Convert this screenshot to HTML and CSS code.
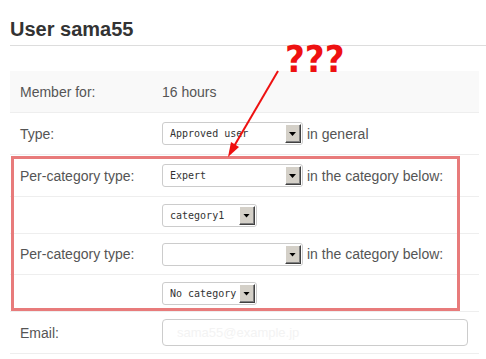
FILE: index.html
```html
<!DOCTYPE html>
<html>

<head>
  <title>User sama55</title>
  <link rel="stylesheet" href="styles.css">
</head>

<body>
  <div class="page">
    <h1 class="page-title">User sama55</h1>

    <div class="profile">
      <div class="row row-shaded">
        <div class="row-label">Member for:</div>
        <div class="row-value">16 hours</div>
      </div>
      <div class="row">
        <div class="row-label">Type:</div>
        <div class="row-value">
          <div class="select select-wide"><span>Approved user</span><i class="select-btn"></i></div>
          <span class="row-note">in general</span>
        </div>
      </div>
      <div class="row">
        <div class="row-label">Per-category type:</div>
        <div class="row-value">
          <div class="select select-wide"><span>Expert</span><i class="select-btn"></i></div>
          <span class="row-note">in the category below:</span>
        </div>
      </div>
      <div class="row row-sub">
        <div class="row-label"></div>
        <div class="row-value">
          <div class="select select-narrow"><span>category1</span><i class="select-btn"></i></div>
        </div>
      </div>
      <div class="row row-tight">
        <div class="row-label">Per-category type:</div>
        <div class="row-value">
          <div class="select select-wide"><span></span><i class="select-btn"></i></div>
          <span class="row-note">in the category below:</span>
        </div>
      </div>
      <div class="row row-sub">
        <div class="row-label"></div>
        <div class="row-value">
          <div class="select select-narrow"><span>No category</span><i class="select-btn"></i></div>
        </div>
      </div>
      <div class="row">
        <div class="row-label">Email:</div>
        <div class="row-value">
          <input class="text-input" type="text" placeholder="sama55@example.jp">
        </div>
      </div>
    </div>

    <!-- annotation drawn over the screenshot -->
    <div class="callout-box"></div>
    <svg class="callout-arrow" width="486" height="359" viewBox="0 0 486 359">
      <line x1="278" y1="71" x2="233" y2="148" stroke="#ee1111" stroke-width="2" />
      <polygon points="228,157 239,147 231,142" fill="#ee1111" />
    </svg>
    <div class="callout-text">???</div>
  </div>
</body>

</html>
```

FILE: styles.css
```css
/*  reset */
* {
  margin: 0;
  padding: 0;
  box-sizing: border-box;
}

body {
  background: #fff;
  font-family: "Liberation Sans", Arial, sans-serif;
  color: #555;
}

.page {
  position: relative;
  width: 486px;
  height: 359px;
  overflow: hidden;
}

.page-title {
  margin-left: 10px;
  padding-top: 17px;
  padding-bottom: 4px;
  line-height: 24px;
  font-size: 20px;
  font-weight: bold;
  color: #333;
  border-bottom: 1px solid #ddd;
}

.profile {
  margin: 25px 7px 0 10px;
}

.row {
  display: flex;
  align-items: center;
  height: 42px;
  border-bottom: 1px solid #eee;
  font-size: 14px;
}

.row-shaded {
  background-color: #f9f9f9;
}

.row-tight {
  height: 41px;
}

.row-sub {
  height: 37px;
}

.row-label {
  width: 152px;
  padding-left: 10px;
}

.row-value {
  display: flex;
  align-items: center;
}

.row-note {
  margin-left: 4px;
}

/* old style drop-down */
.select {
  position: relative;
  height: 23px;
  border: 1px solid #ccc;
  border-radius: 3px;
  background: #fff;
  font-family: "DejaVu Sans Mono", monospace;
  font-size: 10px;
  color: #333;
  line-height: 21px;
  padding-left: 7px;
}

.select-wide {
  width: 141px;
}

.select-narrow {
  width: 95px;
}

.select-btn {
  position: absolute;
  top: 1px;
  right: 1px;
  width: 16px;
  height: 19px;
  background: #d4d0c8;
  border: 1px solid;
  border-color: #fff #404040 #404040 #fff;
  box-shadow: inset -1px -1px 0 #808080;
}

.select-btn::after {
  content: "";
  position: absolute;
  left: 3px;
  top: 7px;
  width: 7px;
  height: 4px;
  background: #000;
  clip-path: polygon(0 0, 100% 0, 50% 100%);
}

.text-input {
  width: 306px;
  height: 27px;
  border: 1px solid #ccc;
  border-radius: 4px;
  padding-left: 14px;
  font-family: "Liberation Sans", Arial, sans-serif;
  font-size: 13px;
  outline: none;
}

.text-input::placeholder {
  color: #f3f3f3;
  opacity: 1;
}

/* annotation */
.callout-box {
  position: absolute;
  left: 11px;
  top: 156px;
  width: 449px;
  height: 155px;
  border: 3px solid #e87b7b;
}

.callout-arrow {
  position: absolute;
  left: 0;
  top: 0;
}

.callout-text {
  position: absolute;
  left: 285px;
  top: 37px;
  font-family: "DejaVu Sans Condensed", "DejaVu Sans", sans-serif;
  font-stretch: condensed;
  font-weight: bold;
  font-size: 38px;
  line-height: 44px;
  color: #ee1111;
}
```
